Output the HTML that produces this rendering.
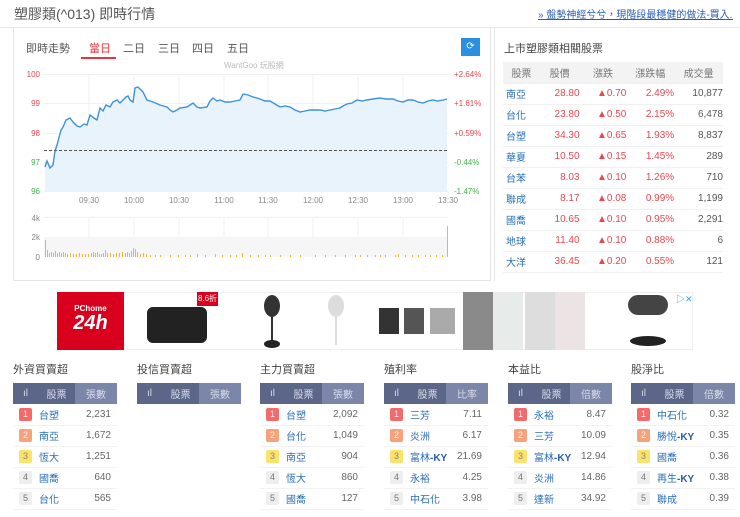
<!DOCTYPE html>
<html><head><meta charset="utf-8"><style>
*{margin:0;padding:0;box-sizing:border-box}
body{width:740px;height:517px;background:#fff;font-family:"Liberation Sans","Noto Sans CJK TC",sans-serif;position:relative;overflow:hidden;color:#555}
.a{position:absolute;white-space:nowrap}
table{border-collapse:collapse}
.rp{position:absolute;left:503px;top:62px;width:220px;font-size:10px}
.rp td,.rp th{height:21px;text-align:right;font-weight:normal;border-bottom:1px solid #f0f0f0}
.rp th{background:#f3f3f3;color:#777;height:21px;text-align:center}
.rp td:first-child{text-align:left;color:#2a6fb6;padding-left:3px}
.rp .r{color:#e8474f}
.rp td:nth-child(3){color:#e8474f}
.bt{position:absolute;width:104px;font-size:10px}
.bt .h{font-size:11px;color:#444;height:20px;line-height:14px}
.bt table{width:104px;table-layout:fixed}
.bt th{height:21px;background:#5b6688;color:#d8dcea;font-weight:normal}
.bt th:first-child{width:25px}
.bt th:nth-child(2){width:37px}
.bt th:last-child{background:#7c86a8}
.bt td{height:21px;border-bottom:1px solid #f2f2f2;white-space:nowrap}
.bt td:first-child{text-align:center}
.bt td:nth-child(2){color:#2a6fb6;padding-left:1px}
.bt td:last-child{text-align:right;padding-right:6px;color:#666}
.n{display:inline-block;width:13px;height:13px;line-height:13px;font-size:9px;text-align:center;border-radius:2px;background:#eee;color:#777}
.n1{background:#f26b6b;color:#fde}.n2{background:#f6a27a;color:#fee}.n3{background:#fbe26a;color:#887}
b{color:#2a5da0}
</style></head><body>
<div class="a" style="left:14px;top:4px;font-size:14px;color:#555">塑膠類(^013) 即時行情</div>
<div class="a" style="left:538px;top:6px;font-size:10px;color:#2a5db0;border-bottom:1px solid #2a5db0;width:195px;overflow:hidden;height:14px">» 盤勢神經兮兮，現階段最穩健的做法-買入...</div>
<div class="a" style="left:0;top:27px;width:740px;border-top:1px solid #e8e8e8"></div>
<div class="a" style="left:13px;top:28px;width:478px;height:253px;border:1px solid #e6e6e6;border-top:none"></div>
<div class="a" style="left:494px;top:28px;width:1px;height:253px;background:#e6e6e6"></div>
<div class="a" style="left:26px;top:40px;font-size:11px;color:#555">即時走勢</div>
<div class="a" style="left:89px;top:40px;font-size:11px;color:#e8353d">當日</div>
<div class="a" style="left:81px;top:57px;width:35px;height:2px;background:#e8353d"></div>
<div class="a" style="left:123px;top:40px;font-size:11px;color:#555">二日</div>
<div class="a" style="left:158px;top:40px;font-size:11px;color:#555">三日</div>
<div class="a" style="left:192px;top:40px;font-size:11px;color:#555">四日</div>
<div class="a" style="left:227px;top:40px;font-size:11px;color:#555">五日</div>
<div class="a" style="left:461px;top:38px;width:19px;height:18px;background:#2a8fe0;color:#fff;font-size:10px;text-align:center;line-height:18px">⟳</div>
<div class="a" style="left:224px;top:60px;font-size:8px;color:#bbb">WantGoo 玩股網</div>
<svg class="a" style="left:0;top:0" width="495" height="280">
<g stroke="#eef0f4" stroke-width="1">
<line x1="44" y1="74.5" x2="448" y2="74.5"/><line x1="44" y1="103.5" x2="448" y2="103.5"/><line x1="44" y1="133.5" x2="448" y2="133.5"/><line x1="44" y1="162.5" x2="448" y2="162.5"/><line x1="44" y1="191.5" x2="448" y2="191.5"/>
<line x1="89" y1="74" x2="89" y2="191"/><line x1="134" y1="74" x2="134" y2="191"/><line x1="179" y1="74" x2="179" y2="191"/><line x1="224" y1="74" x2="224" y2="191"/><line x1="268" y1="74" x2="268" y2="191"/><line x1="313" y1="74" x2="313" y2="191"/><line x1="358" y1="74" x2="358" y2="191"/><line x1="403" y1="74" x2="403" y2="191"/>
<line x1="44" y1="217.5" x2="448" y2="217.5"/>
<line x1="89" y1="217" x2="89" y2="257"/><line x1="134" y1="217" x2="134" y2="257"/><line x1="179" y1="217" x2="179" y2="257"/><line x1="224" y1="217" x2="224" y2="257"/><line x1="268" y1="217" x2="268" y2="257"/><line x1="313" y1="217" x2="313" y2="257"/><line x1="358" y1="217" x2="358" y2="257"/><line x1="403" y1="217" x2="403" y2="257"/>
</g>
<rect x="44" y="237" width="404" height="20" fill="#f6f6f6"/>
<path d="M45 167L47 161L50 168L53 165L55 151L57 145L61 130L63 127L66 120L70 118L73 122L77 126L80 127L84 124L87 125L90 115L94 118L97 120L100 108L103 111L106 105L110 107L113 102L117 100L120 103L123 100L126 97L128 96L130 100L133 102L135 88L138 87L141 90L143 92L147 100L153 102L160 105L167 107L170 110L173 112L177 110L180 108L187 107L190 105L193 103L197 107L200 108L207 107L210 101L213 98L217 101L220 100L225 102L230 102L235 101L240 100L243 94L248 95L253 97L257 98L260 99L265 101L270 101L275 104L280 107L285 106L290 107L295 110L300 112L305 111L310 110L315 110L320 110L325 111L330 110L335 109L340 108L343 106L347 104L352 103L357 100L362 101L367 100L373 99L380 98L386 99L393 99L398 101L403 102L408 100L413 100L418 102L423 103L428 101L433 100L438 101L443 100L447 99L447 191L45 191Z" fill="#e9f3fc"/>
<path d="M45 167L47 161L50 168L53 165L55 151L57 145L61 130L63 127L66 120L70 118L73 122L77 126L80 127L84 124L87 125L90 115L94 118L97 120L100 108L103 111L106 105L110 107L113 102L117 100L120 103L123 100L126 97L128 96L130 100L133 102L135 88L138 87L141 90L143 92L147 100L153 102L160 105L167 107L170 110L173 112L177 110L180 108L187 107L190 105L193 103L197 107L200 108L207 107L210 101L213 98L217 101L220 100L225 102L230 102L235 101L240 100L243 94L248 95L253 97L257 98L260 99L265 101L270 101L275 104L280 107L285 106L290 107L295 110L300 112L305 111L310 110L315 110L320 110L325 111L330 110L335 109L340 108L343 106L347 104L352 103L357 100L362 101L367 100L373 99L380 98L386 99L393 99L398 101L403 102L408 100L413 100L418 102L423 103L428 101L433 100L438 101L443 100L447 99" fill="none" stroke="#3d92dc" stroke-width="1.4"/>
<line x1="44" y1="150.5" x2="448" y2="150.5" stroke="#555" stroke-dasharray="3,2"/>
<path d="M45.5 257V240M47.5 257V250M49.5 257V253M51.5 257V252M53.5 257V253M55.5 257V251M57.5 257V253M59.5 257V252M61.5 257V253M63.5 257V252M65.5 257V253M67.5 257V254M70.5 257V253M73.5 257V254M76.5 257V254M79.5 257V253M82.5 257V254M85.5 257V254M88.5 257V254M91.5 257V253M93.5 257V252M95.5 257V253M97.5 257V252M99.5 257V254M101.5 257V254M103.5 257V253M105.5 257V250M107.5 257V253M110.5 257V253M113.5 257V254M116.5 257V253M119.5 257V253M122.5 257V252M125.5 257V253M127.5 257V252M129.5 257V253M131.5 257V251M133.5 257V248M135.5 257V249M137.5 257V252M140.5 257V254M143.5 257V253M146.5 257V254M150.5 257V255M155.5 257V255M160.5 257V255M170.5 257V255M178.5 257V255M185.5 257V255M190.5 257V255M197.5 257V254M205.5 257V255M215.5 257V254M222.5 257V255M230.5 257V255M236.5 257V255M242.5 257V253M250.5 257V255M258.5 257V255M265.5 257V255M270.5 257V255M280.5 257V255M290.5 257V255M300.5 257V255M315.5 257V255M325.5 257V255M335.5 257V255M345.5 257V255M355.5 257V255M360.5 257V255M367.5 257V255M375.5 257V255M380.5 257V255M385.5 257V255M395.5 257V255M398.5 257V254M405.5 257V255M412.5 257V255M418.5 257V255M425.5 257V255M430.5 257V255M436.5 257V255M442.5 257V255M447.5 257V226" stroke="#f2b632" stroke-width="1"/>
<g font-size="8" font-family="Liberation Sans">
<text x="40" y="77" text-anchor="end" fill="#e8474f">100</text>
<text x="40" y="106" text-anchor="end" fill="#e8474f">99</text>
<text x="40" y="136" text-anchor="end" fill="#e8474f">98</text>
<text x="40" y="165" text-anchor="end" fill="#3cb44b">97</text>
<text x="40" y="194" text-anchor="end" fill="#3cb44b">96</text>
<text x="454" y="77" fill="#e8474f">+2.64%</text>
<text x="454" y="106" fill="#e8474f">+1.61%</text>
<text x="454" y="136" fill="#e8474f">+0.59%</text>
<text x="454" y="165" fill="#3cb44b">-0.44%</text>
<text x="454" y="194" fill="#3cb44b">-1.47%</text>
<g fill="#888" text-anchor="middle">
<text x="89" y="203">09:30</text><text x="134" y="203">10:00</text><text x="179" y="203">10:30</text><text x="224" y="203">11:00</text><text x="268" y="203">11:30</text><text x="313" y="203">12:00</text><text x="358" y="203">12:30</text><text x="403" y="203">13:00</text><text x="448" y="203">13:30</text>
</g>
<g fill="#888" text-anchor="end"><text x="40" y="221">4k</text><text x="40" y="240">2k</text><text x="40" y="260">0</text></g>
</g>
</svg>
<div class="a" style="left:504px;top:40px;font-size:11px;color:#444">上市塑膠類相關股票</div>
<table class="rp">
<tr><th>股票</th><th>股價</th><th>漲跌</th><th>漲跌幅</th><th>成交量</th></tr>
<tr><td>南亞</td><td class="r">28.80</td><td>▲0.70</td><td class="r">2.49%</td><td>10,877</td></tr>
<tr><td>台化</td><td class="r">23.80</td><td>▲0.50</td><td class="r">2.15%</td><td>6,478</td></tr>
<tr><td>台塑</td><td class="r">34.30</td><td>▲0.65</td><td class="r">1.93%</td><td>8,837</td></tr>
<tr><td>華夏</td><td class="r">10.50</td><td>▲0.15</td><td class="r">1.45%</td><td>289</td></tr>
<tr><td>台苯</td><td class="r">8.03</td><td>▲0.10</td><td class="r">1.26%</td><td>710</td></tr>
<tr><td>聯成</td><td class="r">8.17</td><td>▲0.08</td><td class="r">0.99%</td><td>1,199</td></tr>
<tr><td>國喬</td><td class="r">10.65</td><td>▲0.10</td><td class="r">0.95%</td><td>2,291</td></tr>
<tr><td>地球</td><td class="r">11.40</td><td>▲0.10</td><td class="r">0.88%</td><td>6</td></tr>
<tr><td>大洋</td><td class="r">36.45</td><td>▲0.20</td><td class="r">0.55%</td><td>121</td></tr>
</table>
<div class="a" style="left:57px;top:292px;width:636px;height:58px;border:1px solid #eee;background:#fff"></div>
<div class="a" style="left:57px;top:292px;width:67px;height:58px;background:#d8001c;color:#fff;font-weight:bold;text-align:center"><div style="font-size:8px;margin-top:12px">PChome</div><div style="font-size:20px;font-style:italic;line-height:20px">24h</div></div>
<div class="a" style="left:147px;top:307px;width:60px;height:36px;background:#222;border-radius:6px"></div>
<div class="a" style="left:197px;top:292px;width:21px;height:14px;background:#d8001c;color:#fff;font-size:8px;text-align:center;line-height:14px">8.6折</div>
<div class="a" style="left:264px;top:295px;width:16px;height:22px;border-radius:50%;background:#333"></div><div class="a" style="left:271px;top:315px;width:2px;height:25px;background:#333"></div><div class="a" style="left:264px;top:340px;width:16px;height:8px;border-radius:50%;background:#222"></div>
<div class="a" style="left:328px;top:295px;width:16px;height:22px;border-radius:50%;background:#ddd"></div><div class="a" style="left:335px;top:315px;width:2px;height:30px;background:#ddd"></div>
<div class="a" style="left:379px;top:308px;width:76px;height:26px;background:linear-gradient(90deg,#333 0 20px,#fff 20px 25px,#555 25px 45px,#fff 45px 51px,#aaa 51px)"></div>
<div class="a" style="left:463px;top:292px;width:30px;height:58px;background:#8a8a8a"></div>
<div class="a" style="left:493px;top:292px;width:30px;height:58px;background:#e7ecea"></div>
<div class="a" style="left:525px;top:292px;width:30px;height:58px;background:#ddd"></div>
<div class="a" style="left:555px;top:292px;width:30px;height:58px;background:#ece4e4"></div>
<div class="a" style="left:628px;top:295px;width:40px;height:20px;background:#444;border-radius:10px"></div><div class="a" style="left:630px;top:336px;width:36px;height:10px;background:#222;border-radius:50%"></div>
<div class="a" style="left:676px;top:292px;font-size:9px;color:#3aa5e0">▷✕</div>
<div class="bt" style="left:13px;top:363px"><div class="h">外資買賣超</div><table><tr><th>ıl</th><th>股票</th><th>張數</th></tr>
<tr><td><span class="n n1">1</span></td><td>台塑</td><td>2,231</td></tr><tr><td><span class="n n2">2</span></td><td>南亞</td><td>1,672</td></tr><tr><td><span class="n n3">3</span></td><td>恆大</td><td>1,251</td></tr><tr><td><span class="n">4</span></td><td>國喬</td><td>640</td></tr><tr><td><span class="n">5</span></td><td>台化</td><td>565</td></tr></table></div>
<div class="bt" style="left:137px;top:363px"><div class="h">投信買賣超</div><table><tr><th>ıl</th><th>股票</th><th>張數</th></tr></table></div>
<div class="bt" style="left:260px;top:363px"><div class="h">主力買賣超</div><table><tr><th>ıl</th><th>股票</th><th>張數</th></tr>
<tr><td><span class="n n1">1</span></td><td>台塑</td><td>2,092</td></tr><tr><td><span class="n n2">2</span></td><td>台化</td><td>1,049</td></tr><tr><td><span class="n n3">3</span></td><td>南亞</td><td>904</td></tr><tr><td><span class="n">4</span></td><td>恆大</td><td>860</td></tr><tr><td><span class="n">5</span></td><td>國喬</td><td>127</td></tr></table></div>
<div class="bt" style="left:384px;top:363px"><div class="h">殖利率</div><table><tr><th>ıl</th><th>股票</th><th>比率</th></tr>
<tr><td><span class="n n1">1</span></td><td>三芳</td><td>7.11</td></tr><tr><td><span class="n n2">2</span></td><td>炎洲</td><td>6.17</td></tr><tr><td><span class="n n3">3</span></td><td>富林<b>-KY</b></td><td>21.69</td></tr><tr><td><span class="n">4</span></td><td>永裕</td><td>4.25</td></tr><tr><td><span class="n">5</span></td><td>中石化</td><td>3.98</td></tr></table></div>
<div class="bt" style="left:508px;top:363px"><div class="h">本益比</div><table><tr><th>ıl</th><th>股票</th><th>倍數</th></tr>
<tr><td><span class="n n1">1</span></td><td>永裕</td><td>8.47</td></tr><tr><td><span class="n n2">2</span></td><td>三芳</td><td>10.09</td></tr><tr><td><span class="n n3">3</span></td><td>富林<b>-KY</b></td><td>12.94</td></tr><tr><td><span class="n">4</span></td><td>炎洲</td><td>14.86</td></tr><tr><td><span class="n">5</span></td><td>達新</td><td>34.92</td></tr></table></div>
<div class="bt" style="left:631px;top:363px"><div class="h">股淨比</div><table><tr><th>ıl</th><th>股票</th><th>倍數</th></tr>
<tr><td><span class="n n1">1</span></td><td>中石化</td><td>0.32</td></tr><tr><td><span class="n n2">2</span></td><td>勝悅<b>-KY</b></td><td>0.35</td></tr><tr><td><span class="n n3">3</span></td><td>國喬</td><td>0.36</td></tr><tr><td><span class="n">4</span></td><td>再生<b>-KY</b></td><td>0.38</td></tr><tr><td><span class="n">5</span></td><td>聯成</td><td>0.39</td></tr></table></div>
</body></html>
